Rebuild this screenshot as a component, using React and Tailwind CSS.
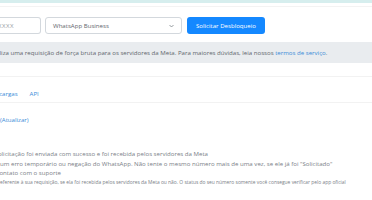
import React from 'react';

const App = () => {
  return (
    <div className="w-[372px] h-[200px] overflow-hidden bg-white font-['Open_Sans',sans-serif] text-[6.1px] text-[#5f666d]">
      <div className="h-[3px] bg-[#d6eeee]" />
      <div className="h-[4px] border-b border-[#f3f3f3]" />

      {/* form row */}
      <div className="flex items-center mt-[10px] h-[17px]">
        <div className="w-[41px] h-[17px] border border-[#d3d8dd] border-l-0 rounded-r-[3px] flex items-center overflow-hidden">
          <span className="ml-[-2px] text-[#9aa0a6] tracking-[0.5px]">XXXX</span>
        </div>
        <div className="ml-[4px] w-[137px] h-[17px] border border-[#d3d8dd] rounded-[3px] flex items-center justify-between px-[7px]">
          <span className="text-[#5f666d]">WhatsApp Business</span>
          <svg width="5" height="4" viewBox="0 0 10 6" className="text-[#6b7278]">
            <path d="M1 1l4 4 4-4" stroke="currentColor" strokeWidth="1.4" fill="none" />
          </svg>
        </div>
        <button className="ml-[5px] h-[17px] px-[9px] bg-[#1488ff] text-white rounded-[3px] text-[6.1px]">
          Solicitar Desbloqueio
        </button>
      </div>

      {/* info bar */}
      <div className="mt-[8px] h-[21px] bg-[#e9ecef] flex items-center overflow-hidden whitespace-nowrap">
        <p className="ml-[-11px]">
          Realiza uma requisição de força bruta para os servidores da Meta. Para maiores dúvidas, leia nossos{' '}
          <span className="text-[#3a8bd8]">termos de serviço</span>.
        </p>
      </div>

      {/* tabs */}
      <div className="mt-[13px] border-t border-[#f2f2f2] h-[27px] border-b border-[#e8e8e8] flex items-end pb-[4px] whitespace-nowrap text-[#3a8bd8]">
        <span className="ml-[-8px]">Recargas</span>
        <span className="ml-[12px]">API</span>
      </div>

      <div className="mt-[12px] text-[#3a8bd8] whitespace-nowrap">(Atualizar)</div>

      {/* status list */}
      <div className="mt-[25px] text-[#7a8087] whitespace-nowrap leading-[9.5px]">
        <p className="ml-[-5px]">solicitação foi enviada com sucesso e foi recebida pelos servidores da Meta</p>
        <p>um erro temporário ou negação do WhatsApp. Não tente o mesmo número mais de uma vez, se ele já foi "Solicitado"</p>
        <p className="ml-[-3.5px]">contato com o suporte</p>
        <p className="text-[4.9px] leading-[9px] ml-[-2px]">referente à sua requisição, se ela foi recebida pelos servidores da Meta ou não. O status do seu número somente você consegue verificar pelo app oficial</p>
      </div>
    </div>
  );
};

export default App;
